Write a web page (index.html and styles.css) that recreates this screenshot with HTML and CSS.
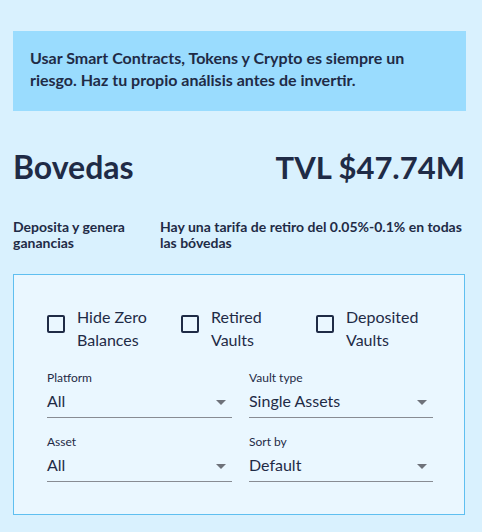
FILE: index.html
```html
<!DOCTYPE html>
<html lang="es">
<head>
<meta charset="utf-8">
<link rel="stylesheet" href="styles.css">
</head>
<body>
<main class="page">
  <div class="banner">Usar Smart Contracts, Tokens y Crypto es siempre un riesgo. Haz tu propio análisis antes de invertir.</div>
  <div class="head">
    <h1 class="title">Bovedas</h1>
    <div class="tvl">TVL $47.74M</div>
  </div>
  <div class="subs">
    <div class="sub1">Deposita y genera ganancias</div>
    <div class="sub2">Hay una tarifa de retiro del 0.05%-0.1% en todas las bóvedas</div>
  </div>
  <section class="card">
    <div class="checks">
      <label class="check"><span class="box"></span><span class="ctext">Hide Zero Balances</span></label>
      <label class="check"><span class="box"></span><span class="ctext">Retired Vaults</span></label>
      <label class="check"><span class="box"></span><span class="ctext">Deposited Vaults</span></label>
    </div>
    <div class="selects">
      <div class="field"><div class="flabel">Platform</div><div class="fval"><span>All</span><span class="arrow"></span></div></div>
      <div class="field"><div class="flabel">Vault type</div><div class="fval"><span>Single Assets</span><span class="arrow"></span></div></div>
      <div class="field"><div class="flabel">Asset</div><div class="fval"><span>All</span><span class="arrow"></span></div></div>
      <div class="field"><div class="flabel">Sort by</div><div class="fval"><span>Default</span><span class="arrow"></span></div></div>
    </div>
  </section>
</main>
</body>
</html>
```

FILE: styles.css
```css
html, body { margin: 0; padding: 0; }
body {
  background: #d9f1fe;
  font-family: Lato, "Open Sans", sans-serif;
  color: #1f2b46;
  width: 482px;
  height: 532px;
  overflow: hidden;
}
.page {
  width: 453px;
  margin-left: 13px;
  padding-top: 31px;
}
.banner {
  background: #9adcfe;
  height: 80px;
  box-sizing: border-box;
  padding: 16px 30px 0 17px;
  font-weight: 700;
  font-size: 16px;
  line-height: 22px;
}
.head {
  display: flex;
  justify-content: space-between;
  align-items: center;
  margin-top: 35px;
  height: 42px;
  padding-right: 1px;
}
.title, .tvl {
  margin: 0;
  font-size: 31px;
  font-weight: 700;
  line-height: 42px;
}
.title { font-size: 32px; }
.subs {
  display: flex;
  margin-top: 31px;
  font-size: 14px;
  font-weight: 700;
  line-height: 16px;
}
.sub1 { width: 124px; margin-right: 23px; }
.sub2 { width: 305px; }
.card {
  margin-top: 23px;
  width: 452px;
  height: 241px;
  box-sizing: border-box;
  background: #eaf7ff;
  border: 1px solid #5fbff0;
  padding: 30px 20px 0 33px;
}
.checks {
  display: flex;
}
.check {
  display: flex;
  align-items: center;
  width: 134px;
  flex: none;
}
.check:nth-child(2) { width: 135px; }
.box {
  width: 18px;
  height: 18px;
  box-sizing: border-box;
  border: 2px solid #1f2b46;
  border-radius: 2px;
  flex: none;
  margin-right: 12px;
  margin-top: -9px;
}
.ctext {
  font-size: 16px;
  line-height: 23px;
  width: 84px;
}
.selects {
  display: grid;
  grid-template-columns: 185px 184px;
  column-gap: 17px;
  row-gap: 16px;
  margin-top: 19px;
}
.flabel {
  font-size: 12px;
  line-height: 15px;
}
.fval {
  display: flex;
  justify-content: space-between;
  align-items: center;
  font-size: 16px;
  line-height: 20px;
  padding: 6px 0 6px;
  border-bottom: 1px solid #888c93;
}
.arrow {
  width: 0;
  height: 0;
  border-left: 5px solid transparent;
  border-right: 5px solid transparent;
  border-top: 5px solid #6e727a;
  margin-right: 6px;
  margin-top: 2px;
}
```
